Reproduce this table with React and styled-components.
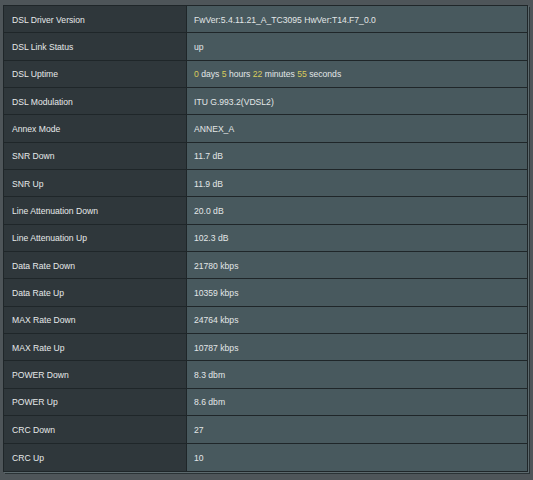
import React from "react"
import styled, { createGlobalStyle } from "styled-components"

const rows = [
  ["DSL Driver Version", "FwVer:5.4.11.21_A_TC3095 HwVer:T14.F7_0.0"],
  ["DSL Link Status", "up"],
  ["DSL Uptime", "uptime"],
  ["DSL Modulation", "ITU G.993.2(VDSL2)"],
  ["Annex Mode", "ANNEX_A"],
  ["SNR Down", "11.7 dB"],
  ["SNR Up", "11.9 dB"],
  ["Line Attenuation Down", "20.0 dB"],
  ["Line Attenuation Up", "102.3 dB"],
  ["Data Rate Down", "21780 kbps"],
  ["Data Rate Up", "10359 kbps"],
  ["MAX Rate Down", "24764 kbps"],
  ["MAX Rate Up", "10787 kbps"],
  ["POWER Down", "8.3 dbm"],
  ["POWER Up", "8.6 dbm"],
  ["CRC Down", "27"],
  ["CRC Up", "10"],
]

const uptime = [
  ["0", "days"],
  ["5", "hours"],
  ["22", "minutes"],
  ["55", "seconds"],
]

const App = () => {
  return (
    <>
      <GlobalStyle />
      <Page>
        <Table>
          {rows.map(([label, value], i) => (
            <Row key={label} last={i === rows.length - 1}>
              <Label>{label}</Label>
              <Value>
                <span>
                  {value === "uptime"
                    ? uptime.map(([num, unit], j) => (
                        <React.Fragment key={unit}>
                          <Num>{num}</Num>
                          {` ${unit}${j < uptime.length - 1 ? " " : ""}`}
                        </React.Fragment>
                      ))
                    : value}
                </span>
              </Value>
            </Row>
          ))}
        </Table>
      </Page>
    </>
  )
}

export default App

const GlobalStyle = createGlobalStyle`
  html, body {
    margin: 0;
    padding: 0;
    background: #4e5559;
  }
`

const Page = styled.div`
  width: 533px;
  height: 480px;
  box-sizing: border-box;
  padding: 5px 0 0 3px;
  background: #4e5559;
  font-family: "Liberation Sans", Arial, sans-serif;
  font-size: 8.6px;
`

const Table = styled.div`
  width: 525px;
  box-sizing: border-box;
  border: 1px solid #1f2629;
  box-shadow: 1px 1px 0 #5d6a6e, 2px 2px 0 #2a3235;
  display: grid;
  grid-template-rows: repeat(17, 27.35px);
`

const Row = styled.div`
  display: grid;
  grid-template-columns: 183px 1fr;
  border-bottom: ${({ last }) => (last ? "none" : "1px solid #1f2629")};
`

const Label = styled.div`
  display: flex;
  align-items: center;
  padding: 1px 0 0 8px;
  background: #2f373b;
  color: #e6e9ea;
  border-right: 1px solid #1f2629;
`

const Value = styled.div`
  display: flex;
  align-items: center;
  padding: 1px 0 0 7px;
  background: #48595e;
  color: #e3e7e8;
  white-space: pre;
`

const Num = styled.span`
  color: #d9cc5c;
`
